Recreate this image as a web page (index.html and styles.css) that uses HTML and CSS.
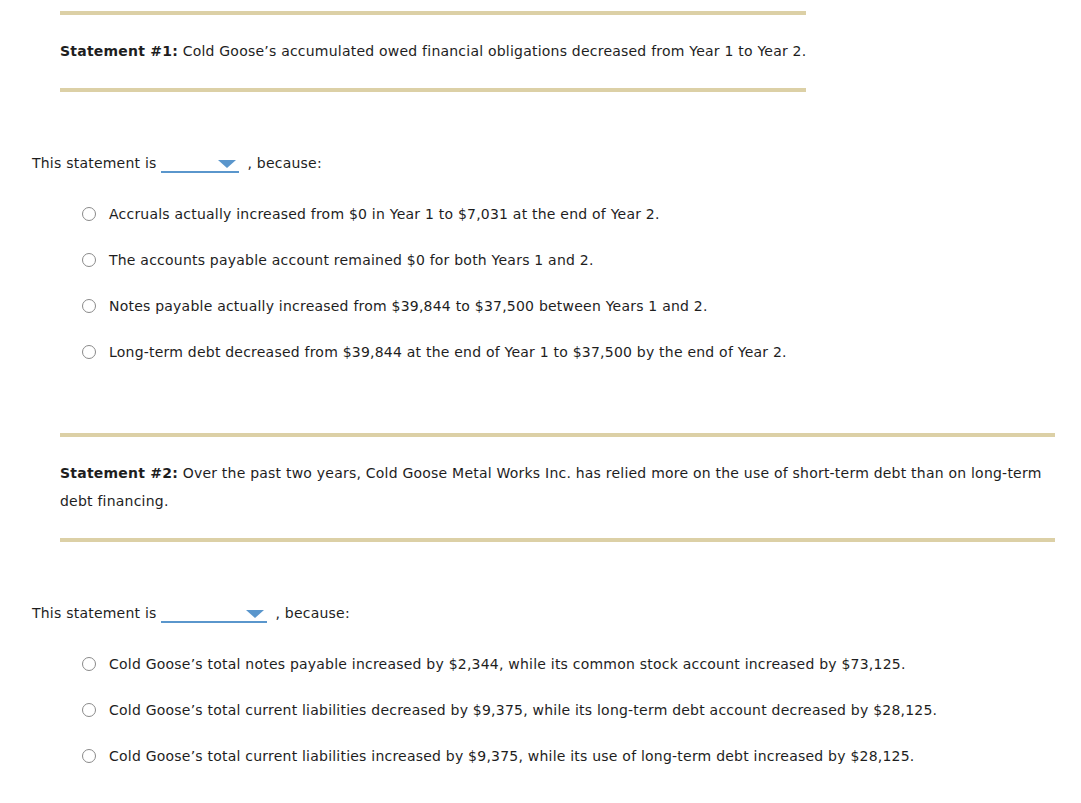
FILE: index.html
```html
<!DOCTYPE html>
<html lang="en">
<head>
<meta charset="utf-8">
<title>Statements</title>
<link rel="stylesheet" href="styles.css">
</head>
<body>
<div class="page">
  <div class="statement">
    <p><b>Statement #1:</b> Cold Goose’s accumulated owed financial obligations decreased from Year 1 to Year 2.</p>
  </div>

  <div class="question"><span>This statement is</span><span class="select short"><span class="arrow"></span></span><span>, because:</span></div>

  <ul class="options">
    <li><span class="radio"></span>Accruals actually increased from $0 in Year 1 to $7,031 at the end of Year 2.</li>
    <li><span class="radio"></span>The accounts payable account remained $0 for both Years 1 and 2.</li>
    <li><span class="radio"></span>Notes payable actually increased from $39,844 to $37,500 between Years 1 and 2.</li>
    <li><span class="radio"></span>Long-term debt decreased from $39,844 at the end of Year 1 to $37,500 by the end of Year 2.</li>
  </ul>

  <div class="statement">
    <p><b>Statement #2:</b> Over the past two years, Cold Goose Metal Works Inc. has relied more on the use of short-term debt than on long-term debt financing.</p>
  </div>

  <div class="question"><span>This statement is</span><span class="select long"><span class="arrow"></span></span><span>, because:</span></div>

  <ul class="options">
    <li><span class="radio"></span>Cold Goose’s total notes payable increased by $2,344, while its common stock account increased by $73,125.</li>
    <li><span class="radio"></span>Cold Goose’s total current liabilities decreased by $9,375, while its long-term debt account decreased by $28,125.</li>
    <li><span class="radio"></span>Cold Goose’s total current liabilities increased by $9,375, while its use of long-term debt increased by $28,125.</li>
  </ul>
</div>
</body>
</html>
```

FILE: styles.css
```css
html, body {
  margin: 0;
  padding: 0;
  background: #ffffff;
}

.page {
  padding: 11px 0 0 32px;
  font-family: "DejaVu Sans", Verdana, sans-serif;
  font-size: 14px;
  letter-spacing: 0.22px;
  color: #1e1e1e;
}

.statement {
  display: table;
  margin-left: 28px;
  max-width: 995px;
  border-top: 4px solid #dcd0a6;
  border-bottom: 4px solid #dcd0a6;
  padding: 22px 0 23px;
}

.statement p {
  margin: 0;
  line-height: 28px;
}

.statement b {
  font-weight: bold;
}

.question {
  margin-top: 61px;
  line-height: 20px;
  display: flex;
  align-items: center;
}

.select {
  display: inline-block;
  position: relative;
  height: 20px;
  box-sizing: border-box;
  border-bottom: 2px solid #5a96cc;
  margin: 0 9px 0 4px;
}

.select.short { width: 78px; }
.select.long { width: 106px; }

.arrow {
  position: absolute;
  right: 3px;
  top: 7px;
  width: 0;
  height: 0;
  border-left: 9px solid transparent;
  border-right: 9px solid transparent;
  border-top: 8px solid #5a96cc;
}

.options {
  list-style: none;
  margin: 31px 0 0 50px;
  padding: 0;
  display: flex;
  flex-direction: column;
  gap: 26px;
}

.options li {
  display: flex;
  align-items: center;
  line-height: 20px;
}

.radio {
  flex: none;
  width: 14px;
  height: 14px;
  box-sizing: border-box;
  border: 1px solid #8a8a8a;
  border-radius: 50%;
  margin-right: 13px;
}

.options + .statement {
  margin-top: 71px;
}
```
